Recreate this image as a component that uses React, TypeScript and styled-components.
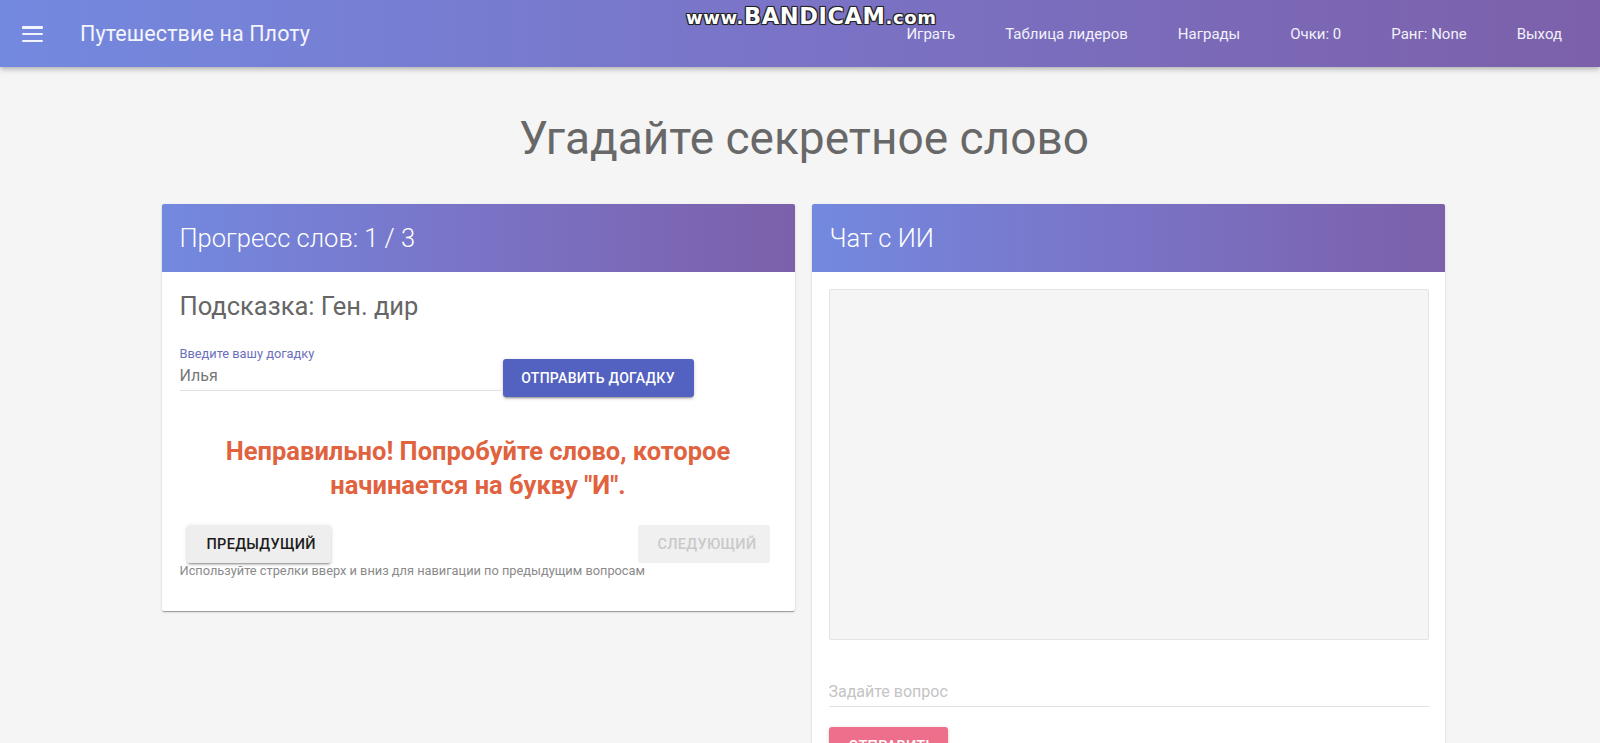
import React from "react";
import styled, { createGlobalStyle } from "styled-components";

const GlobalStyle = createGlobalStyle`
  * { box-sizing: border-box; }
  html, body { margin: 0; padding: 0; }
  body {
    background: #f5f5f5;
    font-family: Roboto, "Noto Sans", "Liberation Sans", sans-serif;
    color: #333;
  }
`;

const gradient = "linear-gradient(90deg, #7389df 0%, #7a73c6 50%, #7c60aa 100%)";

const Page = styled.div`
  min-height: 100vh;
  position: relative;
`;

const AppBar = styled.header`
  height: 67px;
  background: ${gradient};
  display: flex;
  align-items: center;
  padding: 0 38px 0 22px;
  box-shadow: 0 2px 4px -1px rgba(0, 0, 0, 0.2), 0 4px 5px 0 rgba(0, 0, 0, 0.12);
  color: #fff;
`;

const MenuButton = styled.button`
  background: none;
  border: none;
  padding: 0;
  width: 21px;
  height: 16px;
  display: flex;
  flex-direction: column;
  justify-content: space-between;
  cursor: pointer;
  margin-top: 1px;
`;

const MenuLine = styled.span`
  display: block;
  height: 2.5px;
  width: 21px;
  background: #f2f4ff;
  border-radius: 1px;
`;

const BrandTitle = styled.div`
  margin-left: 37px;
  font-size: 21.5px;
  font-weight: 400;
  letter-spacing: 0.1px;
  color: #f4f5fb;
`;

const NavList = styled.nav`
  margin-left: auto;
  display: flex;
  align-items: center;
  gap: 50px;
`;

const NavLink = styled.a`
  font-size: 15px;
  color: #f1f2fa;
  text-decoration: none;
  cursor: pointer;
`;

const Watermark = styled.div`
  position: absolute;
  top: 3px;
  left: 686px;
  font-family: "DejaVu Sans", "Liberation Sans", sans-serif;
  font-weight: 700;
  color: #fff;
  white-space: nowrap;
  text-shadow: -1px -1px 0 #222, 1px -1px 0 #222, -1px 1px 0 #222, 1px 1px 0 #222,
    0 0 2px #000;
  letter-spacing: 0.6px;
  pointer-events: none;
`;

const WatermarkSmall = styled.span`
  font-size: 18px;
`;

const WatermarkBig = styled.span`
  font-size: 22.5px;
`;

const Heading = styled.h1`
  margin: 43px 0 38px;
  text-align: center;
  font-size: 46px;
  line-height: 56px;
  font-weight: 400;
  color: #686868;
  padding-left: 8px;
`;

const Columns = styled.main`
  width: 1283px;
  margin: 0 auto;
  display: grid;
  grid-template-columns: 633px 633px;
  gap: 17px;
  align-items: start;
  padding-left: 3px;
`;

const Card = styled.section`
  background: #fff;
  border-radius: 2px;
  box-shadow: 0 2px 1px -1px rgba(0, 0, 0, 0.2), 0 1px 1px 0 rgba(0, 0, 0, 0.14),
    0 1px 3px 0 rgba(0, 0, 0, 0.12);
  overflow: hidden;
`;

const CardHeader = styled.div`
  height: 68px;
  background: ${gradient};
  display: flex;
  align-items: center;
  padding: 0 18px;
  font-size: 25.5px;
  font-weight: 300;
  color: #fff;
`;

const CardBody = styled.div<{ $pad?: string }>`
  padding: ${(p) => p.$pad || "18px"};
`;

const Hint = styled.div`
  font-size: 25.5px;
  line-height: 32px;
  color: #666;
`;

const GuessRow = styled.div`
  display: flex;
  align-items: flex-start;
  margin-top: 25px;
`;

const Field = styled.label<{ $width?: string }>`
  display: flex;
  flex-direction: column;
  width: ${(p) => p.$width || "100%"};
  border-bottom: 1px solid #e2e2e2;
`;

const FieldLabel = styled.span`
  font-size: 12.8px;
  line-height: 14px;
  color: #6b6fbb;
`;

const FieldInput = styled.input`
  border: none;
  outline: none;
  background: transparent;
  font-family: inherit;
  font-size: 16px;
  height: 29px;
  padding: 2px 0 3px;
  color: #777;
  &::placeholder {
    color: #c4c4c4;
  }
`;

const Button = styled.button<{ $variant: "primary" | "grey" | "disabled" | "pink" }>`
  border: none;
  border-radius: 3px;
  height: 38px;
  padding: 0 ${(p) => (p.$variant === "primary" ? "16px" : "20px")};
  font-family: inherit;
  font-size: 14.5px;
  font-weight: 500;
  letter-spacing: 0.3px;
  text-transform: uppercase;
  cursor: pointer;
  background: ${(p) =>
    p.$variant === "primary"
      ? "#5361c0"
      : p.$variant === "pink"
      ? "#ee6f8c"
      : p.$variant === "grey"
      ? "#eeeeee"
      : "#f0f0f0"};
  color: ${(p) =>
    p.$variant === "grey" ? "#1c1c1c" : p.$variant === "disabled" ? "#c9c9c9" : "#fff"};
  box-shadow: ${(p) =>
    p.$variant === "disabled"
      ? "none"
      : "0 3px 1px -2px rgba(0,0,0,0.2), 0 2px 2px 0 rgba(0,0,0,0.14), 0 1px 5px 0 rgba(0,0,0,0.12)"};
`;

const SubmitGuess = styled(Button)`
  margin-left: 2px;
  margin-top: 12px;
  width: 191px;
  font-size: 14px;
`;

const Message = styled.p`
  margin: 37px 0 23px;
  text-align: center;
  font-size: 25.5px;
  line-height: 34px;
  font-weight: 700;
  color: #e0623e;
`;

const NavButtons = styled.div`
  display: flex;
  justify-content: space-between;
  padding: 0 7px;
`;

const PrevButton = styled(Button)`
  width: 144px;
`;

const NextButton = styled(Button)`
  width: 132px;
`;

const Helper = styled.div`
  font-size: 12.8px;
  line-height: 16px;
  color: #8a8a8a;
  margin-bottom: 14px;
`;

const ChatBox = styled.div`
  height: 351px;
  background: #f5f5f5;
  border: 1px solid #e3e3e3;
  border-radius: 2px;
`;

const ChatField = styled(Field)`
  margin-top: 37px;
`;

const SendButton = styled(Button)`
  margin-top: 20px;
  width: 119px;
`;

export default function App() {
  return (
    <Page>
      <GlobalStyle />
      <AppBar>
        <MenuButton aria-label="menu">
          <MenuLine />
          <MenuLine />
          <MenuLine />
        </MenuButton>
        <BrandTitle>Путешествие на Плоту</BrandTitle>
        <NavList>
          <NavLink>Играть</NavLink>
          <NavLink>Таблица лидеров</NavLink>
          <NavLink>Награды</NavLink>
          <NavLink>Очки: 0</NavLink>
          <NavLink>Ранг: None</NavLink>
          <NavLink>Выход</NavLink>
        </NavList>
      </AppBar>
      <Watermark>
        <WatermarkSmall>www.</WatermarkSmall>
        <WatermarkBig>BANDICAM</WatermarkBig>
        <WatermarkSmall>.com</WatermarkSmall>
      </Watermark>

      <Heading>Угадайте секретное слово</Heading>

      <Columns>
        <Card>
          <CardHeader>Прогресс слов: 1 / 3</CardHeader>
          <CardBody>
            <Hint>Подсказка: Ген. дир</Hint>
            <GuessRow>
              <Field $width="321px">
                <FieldLabel>Введите вашу догадку</FieldLabel>
                <FieldInput defaultValue="Илья" />
              </Field>
              <SubmitGuess $variant="primary">Отправить догадку</SubmitGuess>
            </GuessRow>
            <Message>
              Неправильно! Попробуйте слово, которое
              <br />
              начинается на букву "И".
            </Message>
            <NavButtons>
              <PrevButton $variant="grey">Предыдущий</PrevButton>
              <NextButton $variant="disabled" disabled>
                Следующий
              </NextButton>
            </NavButtons>
            <Helper>Используйте стрелки вверх и вниз для навигации по предыдущим вопросам</Helper>
          </CardBody>
        </Card>

        <Card>
          <CardHeader>Чат с ИИ</CardHeader>
          <CardBody $pad="17px 16px 20px 17px">
            <ChatBox />
            <ChatField>
              <FieldInput placeholder="Задайте вопрос" />
            </ChatField>
            <SendButton $variant="pink">Отправить</SendButton>
          </CardBody>
        </Card>
      </Columns>
    </Page>
  );
}
